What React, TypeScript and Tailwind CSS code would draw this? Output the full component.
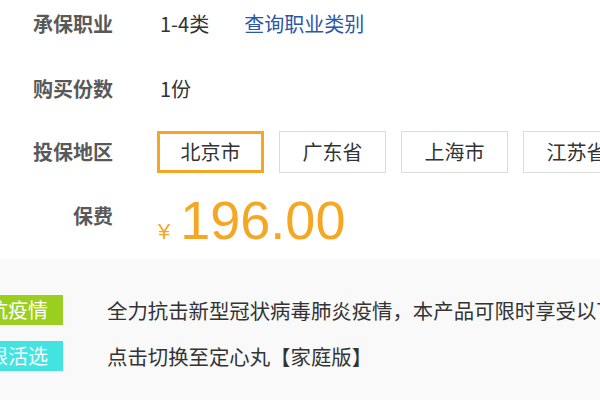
import React from "react";

const cjk = { fontFamily: '"Noto Sans CJK SC", "Noto Sans", sans-serif' };

function Row({ label, children, className }: { label: string; children: React.ReactNode; className: string }) {
  return (
    <div className={`flex items-center ${className}`}>
      <div className="w-[113px] shrink-0 text-right text-[20px] font-bold text-[#595959]">{label}</div>
      <div className="ml-[47px] flex items-center">{children}</div>
    </div>
  );
}

export default function App() {
  const regions = ["北京市", "广东省", "上海市", "江苏省"];
  return (
    <div className="w-[600px] h-[400px] overflow-hidden bg-white" style={cjk}>
      <Row label="承保职业" className="h-[48px]">
        <span className="text-[20px] text-[#333]">1-4类</span>
        <a className="ml-[35px] text-[20px] text-[#2a57a8] cursor-pointer">查询职业类别</a>
      </Row>
      <Row label="购买份数" className="h-[82px]">
        <span className="text-[20px] text-[#333]">1份</span>
      </Row>
      <Row label="投保地区" className="h-[42px] mt-px">
        <div className="-ml-[3px] flex gap-[15px]">
          {regions.map((r, i) => (
            <div
              key={r}
              className={
                i === 0
                  ? "w-[107px] h-[42px] shrink-0 flex items-center justify-center border-[3px] border-[#f5a623] text-[20px] text-[#333]"
                  : "w-[107px] h-[42px] shrink-0 flex items-center justify-center border border-[#dcdcdc] text-[20px] text-[#333]"
              }
            >
              {r}
            </div>
          ))}
        </div>
      </Row>
      <Row label="保费" className="h-[86px]">
        <div className="-ml-[2px] flex items-baseline pt-[8px] text-[#f5a623]">
          <span className="text-[22px] leading-none" style={{ fontFamily: '"Liberation Sans", sans-serif' }}>¥</span>
          <span className="ml-[10px] text-[54px] leading-none" style={{ fontFamily: '"Liberation Sans", sans-serif' }}>196.00</span>
        </div>
      </Row>
      <div className="h-[141px] bg-[#f9f9f9] pt-[36px] flex flex-col gap-[15px]">
        <div className="flex items-center">
          <div className="w-[63px] h-[30px] shrink-0 overflow-hidden flex justify-end items-center pr-[15px] bg-[#9bcf1f]">
            <span className="whitespace-nowrap text-[20px] text-white leading-none">抗疫情</span>
          </div>
          <span className="ml-[44px] whitespace-nowrap text-[20.4px] text-[#333]">全力抗击新型冠状病毒肺炎疫情，本产品可限时享受以下优惠</span>
        </div>
        <div className="flex items-center">
          <div className="w-[63px] h-[30px] shrink-0 overflow-hidden flex justify-end items-center pr-[15px] bg-[#42e3e0]">
            <span className="whitespace-nowrap text-[20px] text-white leading-none">限活选</span>
          </div>
          <span className="ml-[44px] whitespace-nowrap text-[20.4px] text-[#333]">点击切换至定心丸【家庭版】</span>
        </div>
      </div>
    </div>
  );
}
